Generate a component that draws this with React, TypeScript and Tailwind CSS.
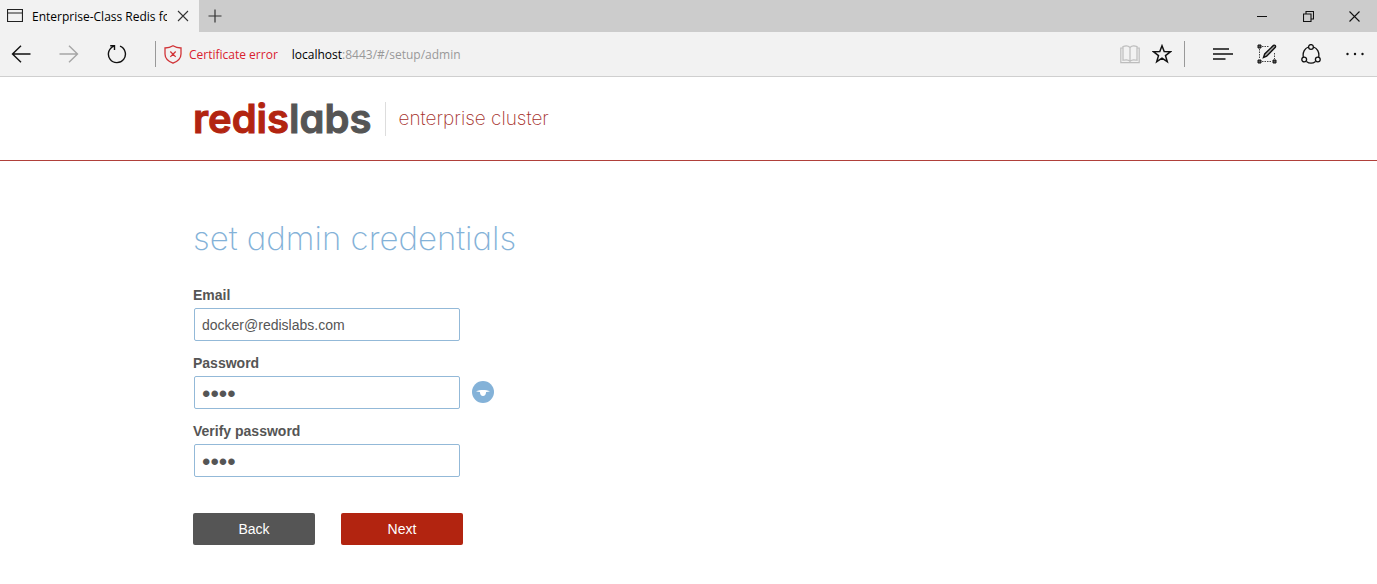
import { useState, type ReactNode } from "react";

function IconButton({ label, className = "", children }: { label: string; className?: string; children: ReactNode }) {
  return (
    <button type="button" aria-label={label} className={`flex shrink-0 items-center justify-center ${className}`}>
      {children}
    </button>
  );
}

function TabBar() {
  return (
    <div className="flex h-8 justify-between bg-[#cccccc]">
      <div className="flex">
        <div className="flex w-[199px] items-center bg-[#f2f2f2] pl-[7px] pr-2">
          <svg width="16" height="14" viewBox="0 0 16 14" fill="none" stroke="#222" className="shrink-0">
            <path d="M.5 .5h15v12H.5zM.5 4h15" strokeWidth="1.2" />
          </svg>
          <span className="ml-[9px] w-[135px] overflow-hidden pt-px whitespace-nowrap text-black">Enterprise-Class Redis for</span>
          <IconButton label="Close tab" className="ml-2 size-4">
            <svg width="12" height="12" viewBox="0 0 12 12" stroke="#333" strokeWidth="1.1"><path d="M1 1l10 10M11 1L1 11" /></svg>
          </IconButton>
        </div>
        <IconButton label="New tab" className="w-8">
          <svg width="14" height="14" viewBox="0 0 14 14" stroke="#333" strokeWidth="1.2"><path d="M7 .5v13M.5 7h13" /></svg>
        </IconButton>
      </div>
      <div className="flex">
        <IconButton label="Minimize" className="w-[46px]">
          <svg width="10" height="10" viewBox="0 0 10 10" stroke="#111"><path d="M0 5.5h10" /></svg>
        </IconButton>
        <IconButton label="Restore" className="w-[46px]">
          <svg width="11" height="11" viewBox="0 0 11 11" fill="none" stroke="#111" strokeWidth="1.1"><path d="M.5 3h7.500v7.500H.5zM3 3V.5h7.500V8H8" /></svg>
        </IconButton>
        <IconButton label="Close" className="w-[46px]">
          <svg width="11" height="11" viewBox="0 0 11 11" stroke="#111" strokeWidth="1.1"><path d="M.5 .5l10 10M10.500 .5l-10 10" /></svg>
        </IconButton>
      </div>
    </div>
  );
}

function Toolbar() {
  return (
    <div className="flex h-[45px] items-center justify-between border-b border-[#cfcfcf] bg-[#f2f2f2]">
      <div className="flex items-center">
        <IconButton label="Back" className="ml-[11px] w-5">
          <svg width="20" height="18" viewBox="0 0 20 18" fill="none" stroke="#111" strokeWidth="1.4"><path d="M19.500 9H1.500M10 .7L1.500 9l8.500 8.300" /></svg>
        </IconButton>
        <IconButton label="Forward" className="ml-7 w-5">
          <svg width="20" height="18" viewBox="0 0 20 18" fill="none" stroke="#a6a6a6" strokeWidth="1.4"><path d="M.5 9h18M10 .7L18.500 9 10 17.300" /></svg>
        </IconButton>
        <IconButton label="Refresh" className="ml-7 w-5">
          <svg width="20" height="20" viewBox="0 0 20 20" fill="none" stroke="#111" strokeWidth="1.4">
            <path d="M13 2.200a8.500 8.500 0 1 1-5.900-.1M3.200 1.800h4.300v4.300" />
          </svg>
        </IconButton>
        <div className="ml-7 h-[26px] w-px bg-[#999999]" />
        <svg width="18" height="19" viewBox="0 0 18 19" fill="none" stroke="#d13438" strokeWidth="1.3" className="ml-2">
          <path d="M9 .8C6.700 2.300 4 3 1 3v6c0 4.400 3.200 7.300 8 9.200 4.800-1.900 8-4.800 8-9.200V3c-3 0-5.700-.7-8-2.200zM6.300 6.500l5.400 5.400M11.700 6.500l-5.400 5.400" />
        </svg>
        <span className="ml-[7px] pt-px text-[#d9212f]">Certificate error</span>
        <span className="ml-[14px] pt-px text-[#999999]"><span className="text-black">localhost</span>:8443/#/setup/admin</span>
      </div>
      <div className="flex items-center">
        <IconButton label="Reading view" className="w-5">
          <svg width="20" height="19" viewBox="0 0 20 19" fill="none" stroke="#bdbdbd" strokeWidth="1.2">
            <path d="M10 2.500C8.500.8 5 .8 3 1.500v13.800c2-.6 5.500-.6 7 1 1.500-1.600 5-1.600 7-1V1.500C15 .8 11.500.8 10 2.500zM10 2.500v14M3 3H.8v14.700h18.400V3H17" />
          </svg>
        </IconButton>
        <IconButton label="Add to favorites" className="ml-3 w-5">
          <svg width="20" height="20" viewBox="0 0 20 20" fill="none" stroke="#111" strokeWidth="1.500">
            <path d="M10 1.800l2.200 5.800 6.200.2-4.900 3.800 1.800 6.100L10 14.200l-5.300 3.500 1.800-6.100L1.600 7.800l6.200-.2z" />
          </svg>
        </IconButton>
        <div className="ml-3 h-[26px] w-px bg-[#999999]" />
        <IconButton label="Hub" className="ml-7 w-5">
          <svg width="20" height="12" viewBox="0 0 20 12" stroke="#111" strokeWidth="1.4"><path d="M0 1h16M0 6h20M0 11h12.500" /></svg>
        </IconButton>
        <IconButton label="Make a web note" className="ml-6 w-5">
          <svg width="20" height="20" viewBox="0 0 20 20" fill="none" stroke="#111">
            <path d="M5 2.500h7M2.500 5v10M5 17.500h10M17.500 9v6" stroke="#444" strokeDasharray="1.500 1" />
            <path d="M1 1h3v3H1zM1 16h3v3H1zM16 16h3v3h-3z" fill="#555" />
            <path d="M6.500 13.500l1.200-3.500L16.500 1.400c1.300-.8 2.600.5 1.800 1.900l-8.700 8.900z" strokeWidth="1.400" fill="#aaa" />
          </svg>
        </IconButton>
        <IconButton label="Share" className="ml-6 w-5">
          <svg width="20" height="20" viewBox="0 0 20 20" fill="none" stroke="#111" strokeWidth="1.300">
            <path d="M7.500 3C3.800 4.200 1.500 8.200 2.300 13M12.500 3c3.700 1.200 6 5.200 5.200 10M5.400 17.400c2.700 2 6.500 2 9.200 0" />
            <circle cx="10" cy="3" r="2.400" /><circle cx="3.200" cy="15.500" r="2.400" /><circle cx="16.800" cy="15.500" r="2.400" />
          </svg>
        </IconButton>
        <IconButton label="More" className="ml-6 mr-3 w-5">
          <svg width="18" height="4" viewBox="0 0 18 4" fill="#111"><circle cx="1.500" cy="2" r="1.200" /><circle cx="9" cy="2" r="1.200" /><circle cx="16.500" cy="2" r="1.200" /></svg>
        </IconButton>
      </div>
    </div>
  );
}

function Field({ id, label, type, value, children }: { id: string; label: string; type: string; value: string; children?: ReactNode }) {
  const [text, setText] = useState(value);
  return (
    <div>
      <label htmlFor={id} className="block h-5 text-sm leading-5 font-bold">{label}</label>
      <div className="mt-[3px] flex items-start gap-3">
        <input
          id={id}
          type={type}
          value={text}
          onChange={(e) => setText(e.target.value)}
          className={`ml-px h-[33px] w-[266px] rounded-xs border border-[#93b9d8] px-[7px] outline-none ${type === "password" ? "pt-[2px] text-2xl" : "text-sm"}`}
        />
        {children}
      </div>
    </div>
  );
}

export default function App() {
  return (
    <div className="min-h-screen bg-white font-['Liberation_Sans',Arial,sans-serif] text-[#555555]">
      <div className="font-['Open_Sans','Noto_Sans',sans-serif] text-xs">
        <TabBar />
        <Toolbar />
      </div>
      <header className="border-b border-[#b0403a] font-['Inter',sans-serif] [font-feature-settings:'cv11']">
        <div className="mx-auto flex h-[83px] max-w-[991px] items-center pt-px">
          <a href="#/" className="text-[40px] leading-none font-semibold">
            <span className="text-[#b22410] [-webkit-text-stroke:1px_#b22410]">redis</span>
            <span className="[-webkit-text-stroke:1px_#555555]">labs</span>
          </a>
          <div className="ml-[14px] h-[34px] w-px bg-[#dddddd]" />
          <span className="ml-3 text-[19px] font-extralight text-[#a5302a]">enterprise cluster</span>
        </div>
      </header>
      <main className="mx-auto max-w-[991px] pt-[57px] pb-10">
        <h1 className="font-['Inter',sans-serif] text-[33px] leading-[40px] font-extralight text-[#84b2d8] [font-feature-settings:'cv11']">set admin credentials</h1>
        <form className="mt-[27px]" onSubmit={(e) => e.preventDefault()}>
          <div className="flex flex-col gap-3">
            <Field id="email" label="Email" type="email" value="docker@redislabs.com" />
            <Field id="password" label="Password" type="password" value="pass">
              <IconButton label="Show password" className="mt-[5px] size-[22px] rounded-full bg-[#84b2d8]">
                <svg width="22" height="22" viewBox="0 0 22 22" fill="#fff">
                  <path d="M4 10.200C6.200 9.300 8.500 8.900 11 8.900s4.800.4 7 1.300c-1.300.5-2.400.7-3.900.8-.2 2.600-1.200 4-3.100 4s-2.900-1.400-3.100-4c-1.500-.1-2.600-.3-3.900-.8z" />
                </svg>
              </IconButton>
            </Field>
            <Field id="verify" label="Verify password" type="password" value="pass" />
          </div>
          <div className="mt-9 flex gap-[26px] text-sm text-white">
            <button type="button" className="h-8 w-[122px] rounded-xs bg-[#555555]">Back</button>
            <button type="submit" className="h-8 w-[122px] rounded-xs bg-[#b22410]">Next</button>
          </div>
        </form>
      </main>
    </div>
  );
}
